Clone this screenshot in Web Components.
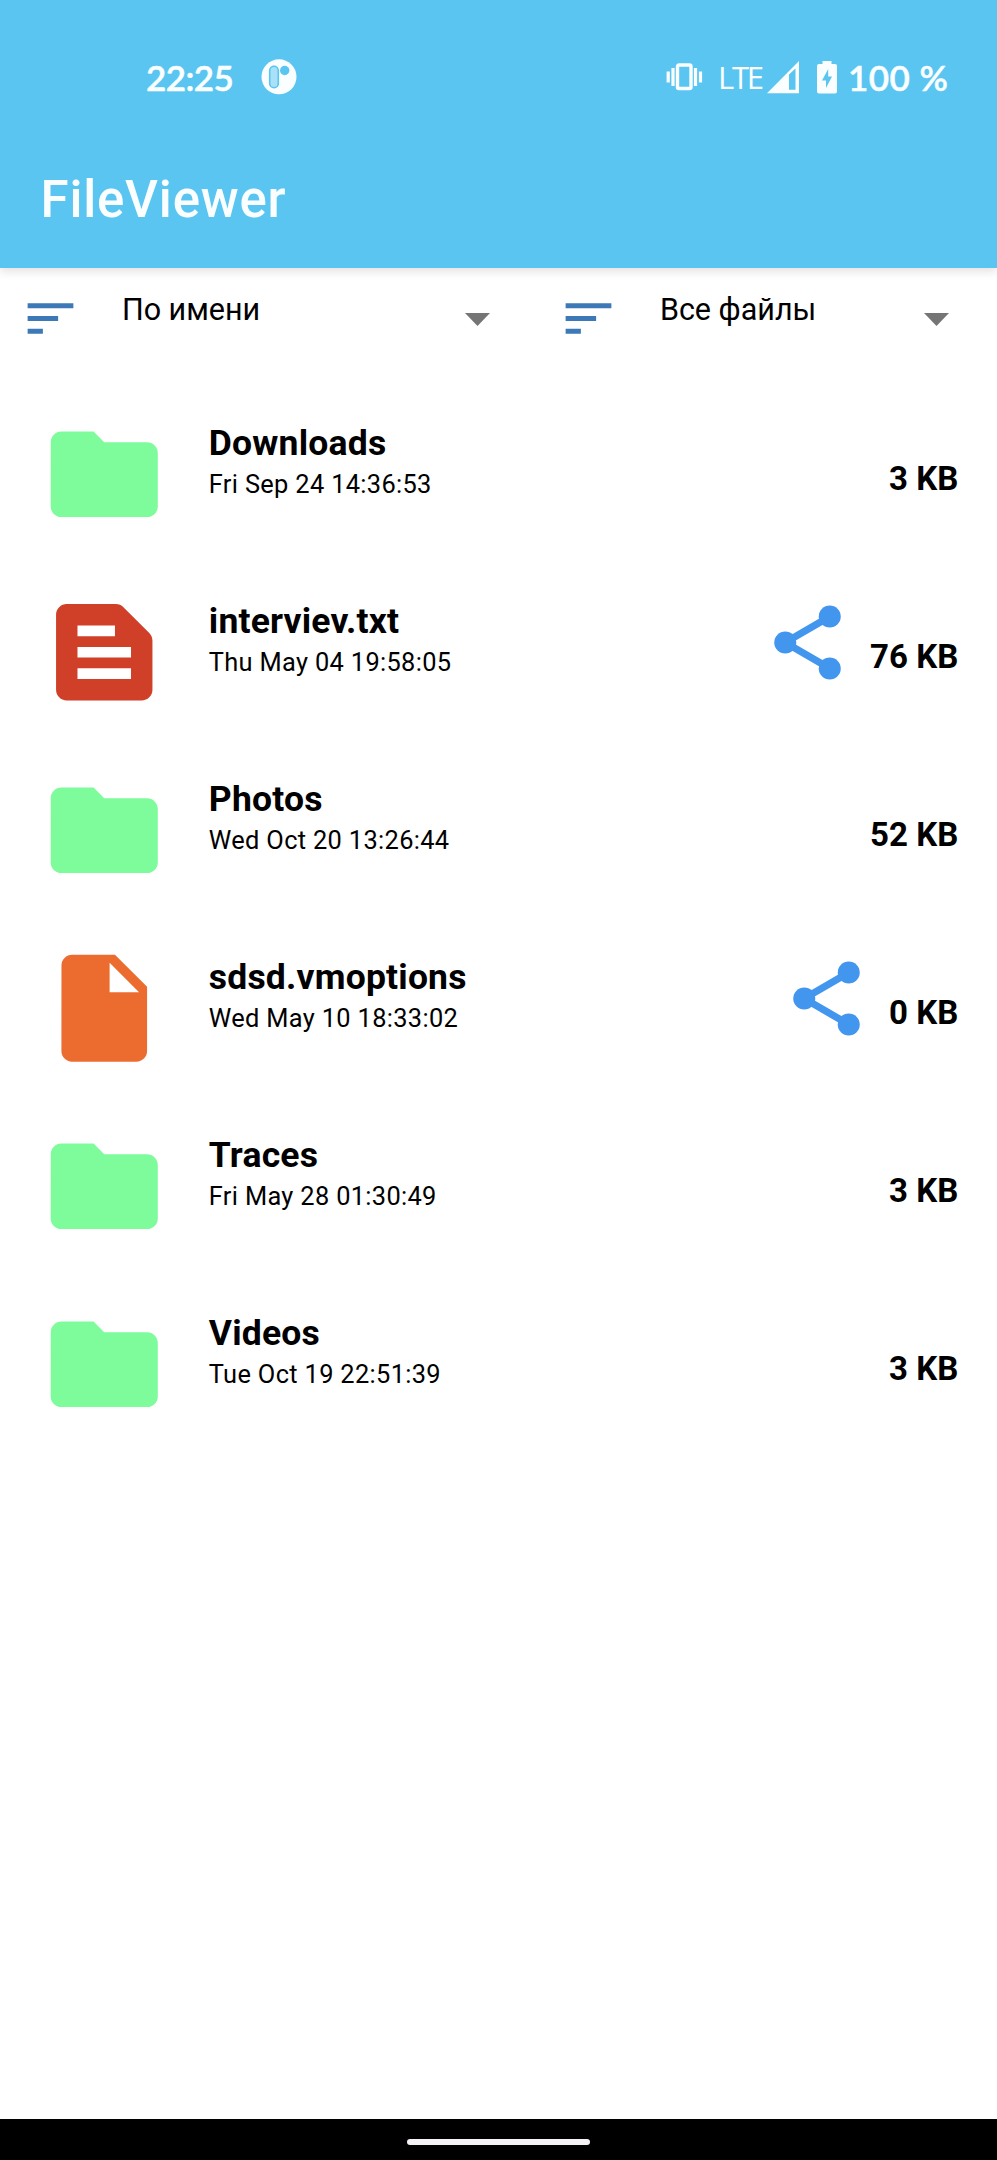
<!DOCTYPE html>
<html lang="ru">
<head>
<meta charset="utf-8">
<title>FileViewer</title>
<style>
html,body{margin:0;background:#fff}
body{font-family:Roboto,"Noto Sans",sans-serif;color:#000}
</style>
</head>
<body>
<file-viewer-app></file-viewer-app>
<script>
const define = (name, html, setup) => customElements.define(name, class extends HTMLElement {
  connectedCallback() {
    if (this.shadowRoot) return;
    const t = document.createElement('template');
    t.innerHTML = html;
    this.attachShadow({mode: 'open'}).append(t.content.cloneNode(true));
    if (setup) setup(this, this.shadowRoot);
  }
});

define('status-bar', `
<style>
:host{display:flex;align-items:center;height:54px;padding:50px 48px 0 146px;color:#fafeff;font:600 35px/54px Lato,sans-serif}
svg{display:block;flex:none}
.time{width:87px;letter-spacing:-.6px;white-space:nowrap;-webkit-text-stroke:.5px}
.app{margin-left:28px}
.gap{flex:1}
.lte{font:400 31px/54px "Open Sans",sans-serif;letter-spacing:-2.2px;margin-left:15px;width:49px}
.pct{margin-left:11px;width:101px;white-space:nowrap;letter-spacing:.5px;-webkit-text-stroke:.5px}
</style>
<span class="time">22:25</span>
<svg class="app" width="36" height="36" viewBox="0 0 36 36"><circle cx="18" cy="17.800" r="17.500" fill="#fafeff"/><rect x="8.700" y="7.300" width="8.600" height="21.500" rx="4.300" fill="#a9e1f8" stroke="#5bc5f2" stroke-width="1.600"/><circle cx="23.700" cy="11.500" r="4.700" fill="#5bc5f2"/></svg>
<span class="gap"></span>
<svg width="37" height="28" viewBox="0 0 37 28" fill="none" stroke="#fafeff"><rect x="11.500" y="2" width="13.500" height="23.500" rx="1.500" stroke-width="3.400"/><path d="M7 5v18M29.500 5v18M2.200 8.500v11M34.500 8.500v11" stroke-width="3.200"/></svg>
<span class="lte">LTE</span>
<svg width="33" height="34" viewBox="0 0 33 34"><path fill="#fafeff" fill-rule="evenodd" d="M0 33.300 32 1V33.300ZM22 14.500V29.800H28.500V8.500Z"/></svg>
<svg style="margin-left:17px" width="20" height="34" viewBox="0 0 20 34"><path fill="#fafeff" d="M5.500 1h9v3H18a2 2 0 0 1 2 2v25.500a2 2 0 0 1-2 2H2a2 2 0 0 1-2-2V6a2 2 0 0 1 2-2h3.500Z"/><path fill="#5bc5f2" d="M11.200 9 5 20.500h4V28l6-11.500h-3.800Z"/></svg>
<span class="pct">100 %</span>`);

define('app-bar', `
<style>
:host{display:block;height:267.500px;background:#5bc5f2;box-shadow:0 3px 9px rgba(60,20,10,.14);position:relative}
h1{margin:0;padding:64px 0 0 40.500px;font:500 51px/64px Roboto,sans-serif;letter-spacing:.8px;color:#fafeff}
</style>
<status-bar></status-bar><h1><slot></slot></h1>`);

define('drop-select', `
<style>
:host{display:flex;align-items:flex-start;box-sizing:border-box;padding-top:20px;height:117px}
.sort{flex:none}
.label{flex:1;font-size:30.500px;line-height:36px;margin:4px 0 0 40.500px;white-space:nowrap}
.arrow{margin-top:25.500px;flex:none}
svg{display:block}
</style>
<svg class="sort" width="61" height="61" viewBox="0 0 24 24" fill="#3d79b6"><path d="M3 18h6v-2H3v2zM3 6v2h18V6H3zm0 7h12v-2H3v2z"/></svg>
<span class="label"><slot></slot></span>
<svg class="arrow" width="25" height="13" viewBox="0 0 25 13"><path d="M0 0h25L12.500 13Z" fill="#757575"/></svg>`);

define('filter-bar', `
<style>
:host{display:grid;grid-template-columns:470px 391px;column-gap:68px;padding-left:20.400px}
</style>
<drop-select>По имени</drop-select><drop-select>Все файлы</drop-select>`);

const ICONS = {
  folder: '<path fill="#7efc9b" d="M10 4H4c-1.100 0-1.990.9-1.990 2L2 18c0 1.100.9 2 2 2h16c1.100 0 2-.9 2-2V8c0-1.100-.9-2-2-2h-8l-2-2z"/>',
  text: '<path fill="#d03f27" d="M20.410 8.410l-4.830-4.830c-.37-.37-.88-.58-1.410-.58H5c-1.100 0-2 .9-2 2v14c0 1.100.9 2 2 2h14c1.100 0 2-.9 2-2V9.830c0-.53-.21-1.040-.59-1.420zM7 7h7v2H7V7zm10 10H7v-2h10v2zm0-4H7v-2h10v2z"/>',
  file: '<path fill="#ec6c30" d="M6 2c-1.100 0-1.990.9-1.990 2L4 20c0 1.100.89 2 1.990 2H18c1.100 0 2-.9 2-2V8l-6-6H6zm7 7V3.500L18.500 9H13z"/>'
};
define('file-icon', `<style>:host{display:block;width:128.500px;height:128.500px;flex:none}svg{display:block;width:100%;height:100%}</style><svg viewBox="0 0 24 24"></svg>`,
  (h, r) => { r.querySelector('svg').innerHTML = ICONS[h.getAttribute('kind')]; });

define('share-button', `
<style>:host{display:block;width:89px;height:89px;flex:none}svg{display:block}</style>
<svg width="89" height="89" viewBox="0 0 24 24" fill="#4396ee"><path d="M18 5 6 12l12 7" fill="none" stroke="#4396ee" stroke-width="1.950"/><circle cx="18" cy="5" r="2.970"/><circle cx="6" cy="12" r="2.970"/><circle cx="18" cy="19" r="2.970"/></svg>`);

define('file-row', `
<style>
:host{display:flex;align-items:flex-start;height:178.100px;padding:0 38.500px 0 40.300px;box-sizing:border-box}
file-icon{margin-top:25px}
.info{flex:1;padding:37px 0 0 40px;white-space:nowrap}
.name{font-weight:700;font-size:35.500px;line-height:42px;letter-spacing:.2px}
.date{font-size:25.400px;line-height:30px;margin-top:5px;letter-spacing:.33px}
share-button{margin-top:35px}
.size{font-weight:700;font-size:33px;line-height:40px;margin:74.500px 0 0 17.500px;white-space:nowrap;letter-spacing:.1px}
</style>
<file-icon></file-icon>
<div class="info"><div class="name"><slot></slot></div><div class="date"></div></div>
<div class="size"></div>`,
  (h, r) => {
    const old = r.querySelector('file-icon'), icon = document.createElement('file-icon');
    icon.setAttribute('kind', h.getAttribute('kind'));
    old.replaceWith(icon);
    r.querySelector('.date').textContent = h.getAttribute('date');
    const size = r.querySelector('.size');
    size.textContent = h.getAttribute('size');
    if (h.getAttribute('kind') !== 'folder') size.before(document.createElement('share-button'));
  });

define('nav-bar', `
<style>:host{display:flex;justify-content:center;height:41px;background:#000}i{width:183px;height:6px;border-radius:3px;background:#f4f2f4;margin-top:20px}</style><i></i>`);

define('file-viewer-app', `
<style>
:host{display:flex;flex-direction:column;width:997px;height:2160px;background:#fff;overflow:hidden}
app-bar,filter-bar,nav-bar{flex:none}
main{flex:1}
</style>
<app-bar>FileViewer</app-bar>
<filter-bar></filter-bar>
<main>
<file-row kind="folder" date="Fri Sep 24 14:36:53" size="3 KB">Downloads</file-row>
<file-row kind="text" date="Thu May 04 19:58:05" size="76 KB">interviev.txt</file-row>
<file-row kind="folder" date="Wed Oct 20 13:26:44" size="52 KB">Photos</file-row>
<file-row kind="file" date="Wed May 10 18:33:02" size="0 KB">sdsd.vmoptions</file-row>
<file-row kind="folder" date="Fri May 28 01:30:49" size="3 KB">Traces</file-row>
<file-row kind="folder" date="Tue Oct 19 22:51:39" size="3 KB">Videos</file-row>
</main>
<nav-bar></nav-bar>`);
</script>
</body>
</html>
